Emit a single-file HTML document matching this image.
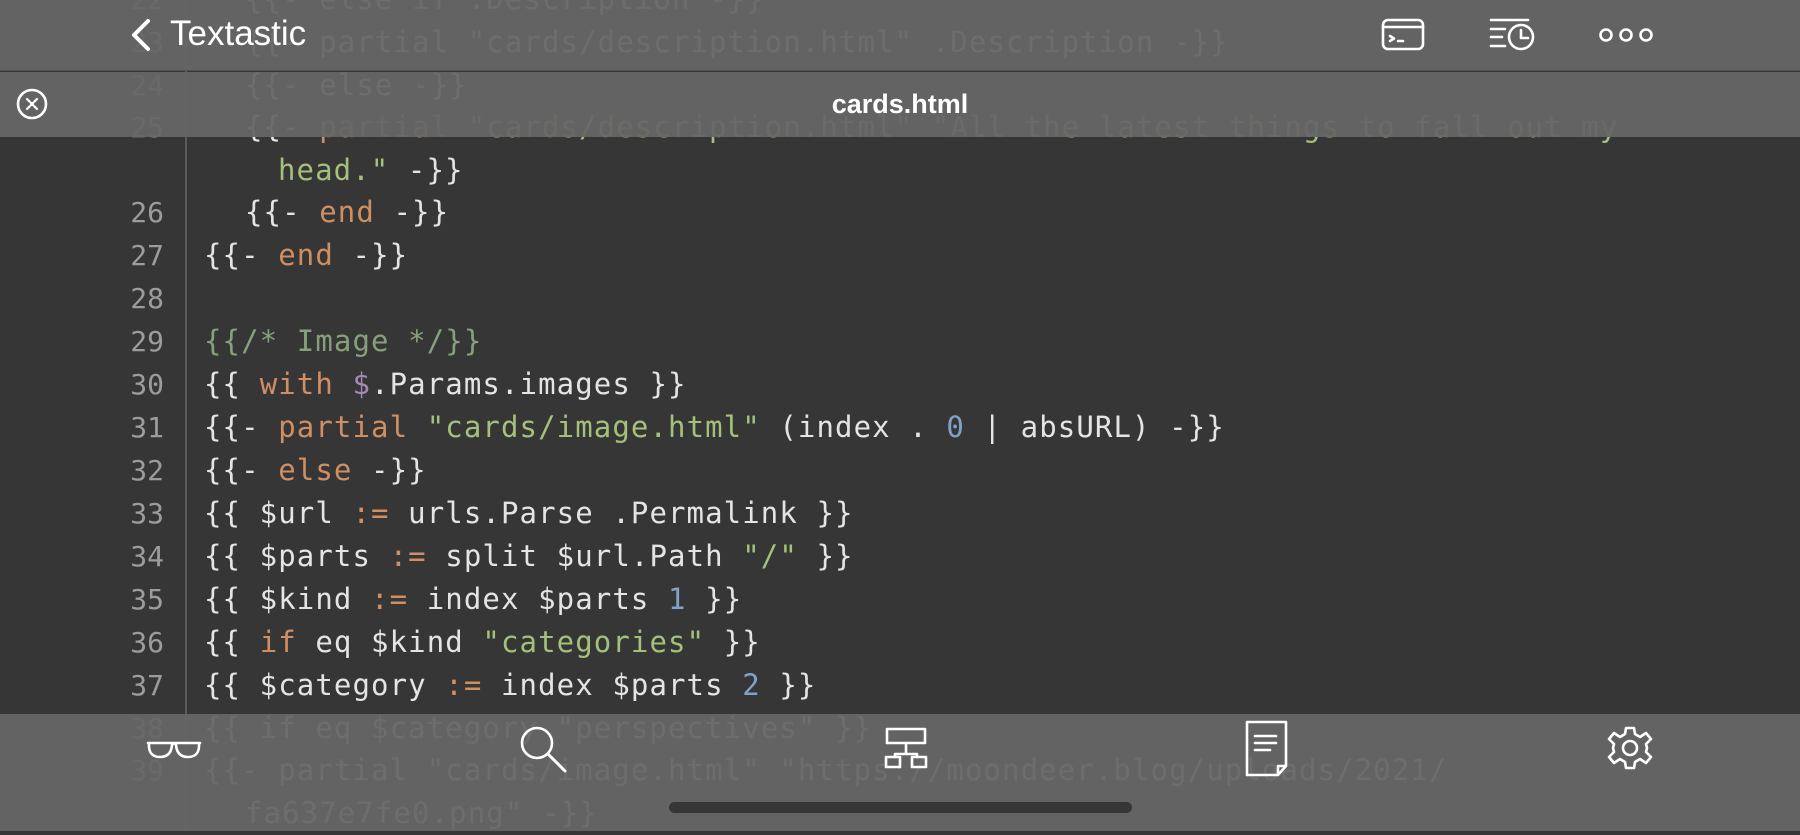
<!DOCTYPE html>
<html><head><meta charset="utf-8"><style>
*{margin:0;padding:0;box-sizing:border-box}
body{width:1800px;height:831px;overflow:hidden;background:#363636;position:relative;font-family:"Liberation Sans",sans-serif}
.code{position:absolute;left:0;top:0;width:1800px;height:831px}
.l{position:absolute;white-space:pre;font-family:"DejaVu Sans Mono","Liberation Mono",monospace;font-size:29px;letter-spacing:1.1px;color:#e4e4e4;line-height:43px}
.n{position:absolute;right:1636px;font-family:"DejaVu Sans Mono","Liberation Mono",monospace;font-size:28px;color:#9c9c9c;line-height:43px;text-align:right}
.k{color:#cf8f62}.s{color:#a5c07a}.c{color:#85a07a}.d{color:#a48ab8}.b{color:#7fa3c8}
.gut{position:absolute;left:185px;top:0;width:2px;height:831px;background:#5a5a5a}
.bar{position:absolute;left:0;width:1800px;background:rgba(102,102,102,0.95)}
</style></head><body>
<div class="code">
<div class="gut"></div>
<div class="n" style="top:-22px">22</div><div class="l" style="top:-22px;left:245px">{{- else if .Description -}}</div>
<div class="n" style="top:21px">23</div><div class="l" style="top:21px;left:245px">{{- partial "cards/description.html" .Description -}}</div>
<div class="n" style="top:64px">24</div><div class="l" style="top:64px;left:245px">{{- else -}}</div>
<div class="n" style="top:106px">25</div><div class="l" style="top:106px;left:245px">{{- <span class="k">partial</span> <span class="s">"cards/description.html" "All the latest things to fall out my</span></div>
<div class="l" style="top:149px;left:278px"><span class="s">head."</span> -}}</div>
<div class="n" style="top:191px">26</div><div class="l" style="top:191px;left:245px">{{- <span class="k">end</span> -}}</div>
<div class="n" style="top:234px">27</div><div class="l" style="top:234px;left:204px">{{- <span class="k">end</span> -}}</div>
<div class="n" style="top:277px">28</div>
<div class="n" style="top:320px">29</div><div class="l c" style="top:320px;left:204px">{{/* Image */}}</div>
<div class="n" style="top:363px">30</div><div class="l" style="top:363px;left:204px">{{ <span class="k">with</span> <span class="d">$</span>.Params.images }}</div>
<div class="n" style="top:406px">31</div><div class="l" style="top:406px;left:204px">{{- <span class="k">partial</span> <span class="s">"cards/image.html"</span> (index . <span class="b">0</span> | absURL) -}}</div>
<div class="n" style="top:449px">32</div><div class="l" style="top:449px;left:204px">{{- <span class="k">else</span> -}}</div>
<div class="n" style="top:492px">33</div><div class="l" style="top:492px;left:204px">{{ $url <span class="k">:=</span> urls.Parse .Permalink }}</div>
<div class="n" style="top:535px">34</div><div class="l" style="top:535px;left:204px">{{ $parts <span class="k">:=</span> split $url.Path <span class="s">"/"</span> }}</div>
<div class="n" style="top:578px">35</div><div class="l" style="top:578px;left:204px">{{ $kind <span class="k">:=</span> index $parts <span class="b">1</span> }}</div>
<div class="n" style="top:621px">36</div><div class="l" style="top:621px;left:204px">{{ <span class="k">if</span> eq $kind <span class="s">"categories"</span> }}</div>
<div class="n" style="top:664px">37</div><div class="l" style="top:664px;left:204px">{{ $category <span class="k">:=</span> index $parts <span class="b">2</span> }}</div>
<div class="n" style="top:707px">38</div><div class="l" style="top:707px;left:204px">{{ if eq $category "perspectives" }}</div>
<div class="n" style="top:749px">39</div><div class="l" style="top:749px;left:204px">{{- partial "cards/image.html" "https://moondeer.blog/uploads/2021/</div>
<div class="l" style="top:792px;left:245px">fa637e7fe0.png" -}}</div>
</div>

<div class="bar" style="top:0;height:71px;border-bottom:1.5px solid #525252"></div>
<div class="bar" style="top:72px;height:65px"></div>
<div class="bar" style="top:714px;height:117px"></div>

<svg style="position:absolute;left:0;top:0" width="1800" height="831" fill="none" stroke="#fff" stroke-width="2.6" stroke-linecap="round" stroke-linejoin="round">
<path d="M148 21 L134 35 L148 49" stroke-width="4"/>
<circle cx="32" cy="104" r="14"/><path d="M27 99 L37 109 M37 99 L27 109" stroke-width="2.2"/>
<rect x="1383" y="20" width="40" height="29" rx="5"/><path d="M1383 27 H1423"/><path d="M1390 36 L1394 38.5 L1390 41 M1398 41 H1403"/>
<path d="M1491 20 H1528 M1491 29 H1505 M1491 37 H1502 M1491 46 H1505"/><circle cx="1521" cy="37" r="12"/><path d="M1521 30 V38 H1528"/>
<circle cx="1606" cy="35" r="5.5"/><circle cx="1626" cy="35" r="5.5"/><circle cx="1646" cy="35" r="5.5"/>
<path d="M148 743 H200 M149 743 Q148 757 160 757 Q171 757 172 745 M199 743 Q200 757 188 757 Q177 757 176 745 M172 745 Q174 742 176 745"/>
<circle cx="537" cy="743" r="15"/><path d="M548 754 L565 771" stroke-width="3"/>
<rect x="887" y="729" width="38" height="14"/><path d="M906 743 V754 M895 754 H917 M895 754 V757 M917 754 V757"/><rect x="886" y="757" width="14" height="10"/><rect x="912" y="757" width="14" height="10"/>
<path d="M1247 722 H1286 V766 L1278 775 H1247 Z M1278 775 V766 H1286"/><path d="M1255 736 H1276 M1255 743 H1276 M1255 750 H1270"/>
<g transform="translate(1630 748)"><circle r="7"/><path d="M-4 -20 L4 -20 L5 -14 L10 -11 L16 -15 L21 -9 L16 -4 L17 0 L16 4 L21 9 L16 15 L10 11 L5 14 L4 20 L-4 20 L-5 14 L-10 11 L-16 15 L-21 9 L-16 4 L-17 0 L-16 -4 L-21 -9 L-16 -15 L-10 -11 L-5 -14 Z"/></g>
</svg>
<div style="position:absolute;left:170px;top:14px;color:#fff;font-size:35px">Textastic</div>
<div style="position:absolute;left:0;width:1800px;top:89px;text-align:center;color:#fff;font-size:27px;font-weight:bold">cards.html</div>
<div style="position:absolute;left:669px;top:802px;width:463px;height:11px;border-radius:6px;background:#363636"></div>
</body></html>
